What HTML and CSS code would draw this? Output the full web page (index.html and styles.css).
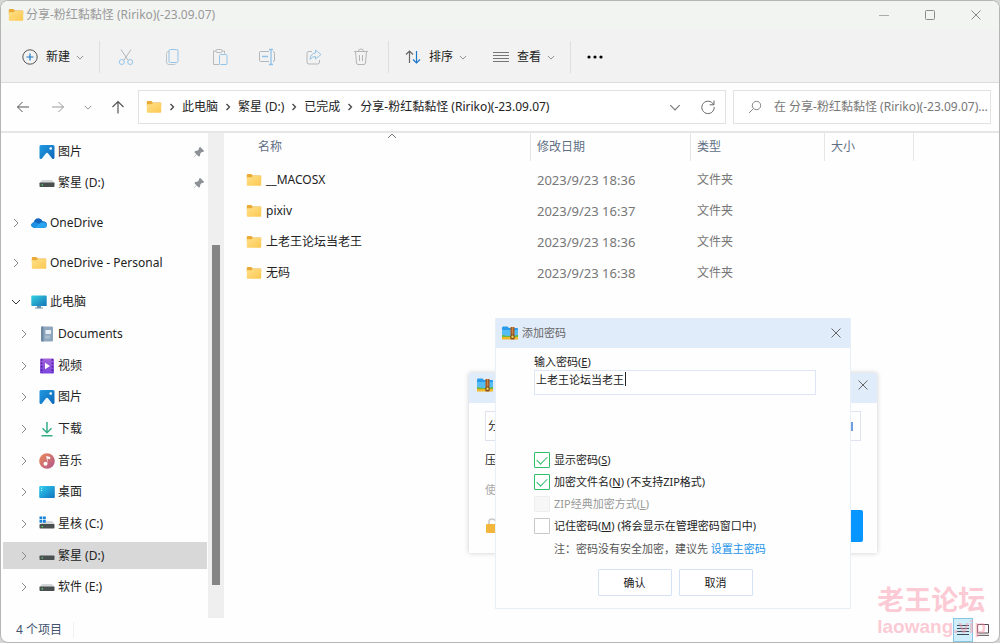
FILE: index.html
```html
<!DOCTYPE html>
<html lang="zh-CN">
<head>
<meta charset="utf-8">
<title>分享-粉红黏黏怪 (Ririko)(-23.09.07)</title>
<link rel="stylesheet" href="styles.css">
</head>
<body>
<svg class="defs" aria-hidden="true">
  <defs>
    <linearGradient id="g-folder" x1="0" y1="0" x2="1" y2="1"><stop offset="0" stop-color="#ffe08a"/><stop offset="1" stop-color="#fbc84f"/></linearGradient>
    <linearGradient id="g-pic" x1="0" y1="0" x2="1" y2="1"><stop offset="0" stop-color="#1e9be0"/><stop offset="1" stop-color="#1066b8"/></linearGradient>
    <linearGradient id="g-pc" x1="0" y1="0" x2="1" y2="1"><stop offset="0" stop-color="#35d0e0"/><stop offset="1" stop-color="#1474b8"/></linearGradient>
    <linearGradient id="g-desk" x1="0" y1="0" x2="1" y2="1"><stop offset="0" stop-color="#2fd0ee"/><stop offset="1" stop-color="#1272c0"/></linearGradient>
    <linearGradient id="g-music" x1="0" y1="0" x2="1" y2="1"><stop offset="0" stop-color="#ec8a55"/><stop offset="1" stop-color="#b0568f"/></linearGradient>
    <linearGradient id="g-video" x1="0" y1="0" x2="0" y2="1"><stop offset="0" stop-color="#a263dc"/><stop offset="1" stop-color="#7c46dd"/></linearGradient>
  </defs>
  <symbol id="folder" viewBox="0 0 16 16"><path d="M.8 3q0-1 1-1h3.5L6.800 3.500H14.400q.8 0 .8.800V7H.8z" fill="#e9ab35"/><path d="M.8 5.200h4.600L7 4h7.400q.8 0 .8.800v8.200q0 .800-.8.800H1.600q-.8 0-.8-.800z" fill="url(#g-folder)"/></symbol>
  <symbol id="picture" viewBox="0 0 16 16"><rect x=".5" y="1" width="15" height="14" rx="1.500" fill="url(#g-pic)"/><path d="M2.500 15L7 9.200q1-1 2 0L13.500 15z" fill="#f3fbff"/><circle cx="11.700" cy="4.500" r="1.300" fill="#fff"/></symbol>
  <symbol id="drive" viewBox="0 0 16 16"><path d="M3 5h10l2.500 3h-15z" fill="#d5d8d8"/><rect x=".5" y="7.500" width="15" height="4.500" rx=".8" fill="#4a4f50"/><rect x="2.500" y="9.300" width="1.500" height="1.200" fill="#58e06b"/></symbol>
  <symbol id="windrive" viewBox="0 0 16 16"><path d="M8 5h5l2.500 3H.5z" fill="#d5d8d8"/><rect x=".5" y="8" width="15" height="4.500" rx=".8" fill="#4a4f50"/><rect x="2.500" y="10" width="1.500" height="1.200" fill="#58e06b"/><path d="M.5.500h2.800v2.800H.5zM4 .500h2.800v2.800H4zM.5 4h2.800v2.800H.5zM4 4h2.800v2.800H4z" fill="#1683d8"/></symbol>
  <symbol id="cloud" viewBox="0 0 16 16"><path d="M3 12.800C-.5 12-.6 8.300 2.600 7.600 3.600 3 9.200 1.600 11.500 6.200 15 5.800 17 9 15.500 11.500q-.8 1.300-2.500 1.300z" fill="#1266bd"/><path d="M2.600 7.600Q5 6.500 7 8.300l6.500 4.400Q9 13.200 3 12.800-.5 12 .2 9.600.8 8 2.600 7.600z" fill="#1a91e2"/><path d="M7 9.700q4.500-4 8.200-1.200 1.300 2 .2 3.200-.8 1.100-2.400 1.100H3.500z" fill="#2aa4ee"/></symbol>
  <symbol id="pc" viewBox="0 0 16 16"><rect x=".3" y="1.500" width="15.400" height="10.500" rx=".8" fill="url(#g-pc)"/><path d="M6 12h4v1.500H6zM4 13.500h8v1H4z" fill="#6d91a8"/></symbol>
  <symbol id="docs" viewBox="0 0 16 16"><rect x="2" y=".5" width="12" height="15" rx="1" fill="#8ea7bd"/><path d="M2 1.500q0-1 1-1h1.500v15H3q-1 0-1-1z" fill="#6c88a2"/><path d="M6.500 4h5.500v4H6.500z" fill="#e6eef5"/><path d="M6 9.500h5v3H6z" fill="#a9bed0"/></symbol>
  <symbol id="video" viewBox="0 0 16 16"><rect x="1" y=".5" width="14" height="15" rx="1" fill="url(#g-video)"/><path d="M2.700 1v14M13.300 1v14" stroke="#4a239b" stroke-width="1.500" stroke-dasharray="1.700 1.700"/><path d="M6 4.800v6.400L11 8z" fill="#fff"/></symbol>
  <symbol id="download" viewBox="0 0 16 16"><path d="M8 1v10.500M3.500 7.200L8 11.700l4.500-4.500M2.500 14.700h11" fill="none" stroke="#35ad89" stroke-width="1.500"/></symbol>
  <symbol id="music" viewBox="0 0 16 16"><circle cx="8" cy="8" r="7.800" fill="url(#g-music)"/><path d="M7.200 3l4 1v2.200L8.500 5.500v5.300" fill="#fff"/><circle cx="6.500" cy="10.800" r="2" fill="#fff"/></symbol>
  <symbol id="desktop" viewBox="0 0 16 16"><rect x=".2" y="2" width="15.600" height="12" rx="1" fill="url(#g-desk)"/><path d="M2 4.200h1.200M2 6.500h1.200" stroke="#d8f6ff"/></symbol>
  <symbol id="pin" viewBox="0 0 12 12"><path d="M7 .8L11.200 5 10 6 8.700 6.100 7.200 7.800 7 10 5.700 10.500 3.700 8.500 1 11.200.6 11.300.8 10.900 3.400 8.200 1.500 6.300 2 5 4.200 4.800 5.900 3.300 6 2z" fill="#8d9196"/></symbol>
  <symbol id="right" viewBox="0 0 6 10"><path d="M1 1l4 4-4 4" fill="none" stroke="currentColor"/></symbol>
  <symbol id="crumb" viewBox="0 0 6 10"><path d="M1.500 2l3 3-3 3" fill="none" stroke="currentColor" stroke-width="1.300"/></symbol>
  <symbol id="down" viewBox="0 0 10 6"><path d="M1 1l4 4 4-4" fill="none" stroke="currentColor"/></symbol>
  <symbol id="close" viewBox="0 0 12 12"><path d="M1.500 1.500l9 9m0-9l-9 9" fill="none" stroke="currentColor"/></symbol>
  <symbol id="zip" viewBox="0 0 16 14"><path d="M0 2q0-1.500 1-1.500h4.500L7 2h8q1 0 1 1v5H0z" fill="#299be8"/><path d="M0 4h16v6H0z" fill="#55bdf3"/><path d="M0 9q8 2 16 0v4H0z" fill="#70b83c"/><path d="M0 11h16v2.500H0z" fill="#f1b72b"/><path d="M8.500 1h4v12.500h-4z" fill="#a95b22"/><path d="M10.500 1.500v8" stroke="#e8b566" stroke-dasharray="1 1"/><rect x="9" y="9" width="3" height="3.500" rx="1" fill="#f8cf59" stroke="#5a3015" stroke-width=".8"/></symbol>
</svg>

<div class="window">
  <header class="titlebar">
    <svg class="ico"><use href="#folder"/></svg>
    <h1 class="title">分享-粉红黏黏怪 (Ririko)(-23.09.07)</h1>
    <div class="winbtns">
      <button class="plain" aria-label="最小化"><svg width="12" height="12"><path d="M1 6.500h10" stroke="#aaa"/></svg></button>
      <button class="plain" aria-label="最大化"><svg width="12" height="12"><rect x="1.500" y="1.500" width="9" height="9" rx="1" fill="none" stroke="#8a8a8a"/></svg></button>
      <button class="plain" aria-label="关闭"><svg width="12" height="12"><use href="#close"/></svg></button>
    </div>
  </header>

  <div class="toolbar">
    <button class="plain tool">
      <svg width="16" height="16"><circle cx="8" cy="8" r="7.200" fill="none" stroke="#555"/><path d="M8 4.500v7M4.500 8h7" stroke="#1c78c8" stroke-width="1.200"/></svg>
      <span>新建</span><svg class="chev"><use href="#down"/></svg>
    </button>
    <span class="sep first-sep"></span>
    <div class="actions">
      <button class="plain" aria-label="剪切"><svg width="18" height="18" fill="none"><path d="M4 1.500l7.300 11M14 1.500l-7.300 11" stroke="#b2b7bb"/><circle cx="4.800" cy="14" r="2.500" stroke="#94c4e8"/><circle cx="13.200" cy="14" r="2.500" stroke="#94c4e8"/></svg></button>
      <button class="plain" aria-label="复制"><svg width="18" height="18" fill="none"><path d="M5 3.500H4q-1.500.5-1.500 2v8.500q0 2.500 2.500 2.500h5.500q1 0 1.500-1" stroke="#bcc4ca"/><rect x="5" y="1.500" width="9" height="13" rx="1.500" stroke="#94c4e8"/></svg></button>
      <button class="plain" aria-label="粘贴"><svg width="18" height="18" fill="none"><path d="M5 3H2.500v13.500H8M11 3h2.500v2.500" stroke="#b8b8b8"/><rect x="5" y="1.500" width="6" height="3" rx="1.200" stroke="#b8b8b8"/><rect x="8.500" y="6.500" width="7.500" height="10" rx="1" stroke="#94c4e8"/></svg></button>
      <button class="plain" aria-label="重命名"><svg width="18" height="18" fill="none"><path d="M11 3.500H2.500q-1 0-1 1v8q0 1 1 1H11M15 3.500q1.500 0 1.500 1.500v7q0 1.500-1.500 1.500" stroke="#b2b7bb"/><path d="M4 8.500h6M11 1.500h4M11 16.500h4M13 1.500v15" stroke="#8fc1e8" stroke-width="1.300"/></svg></button>
      <button class="plain" aria-label="共享"><svg width="18" height="18" fill="none"><path d="M7 3.500H4q-2 0-2 2V14q0 2 2 2h8.500q2 0 2-2v-2" stroke="#b2b7bb"/><path d="M10.500 2l5.500 4.500-5.500 4.500V8.500Q7 8.500 5 11.500 5.500 5.500 10.500 5z" stroke="#94c4e8"/></svg></button>
      <button class="plain" aria-label="删除"><svg width="18" height="18" fill="none" stroke="#b5b5b5"><path d="M2 3.500h14M6.500 3Q6.500 1 9 1t2.500 2M3.500 3.500L4.500 15q.2 1.500 1.500 1.500h6q1.300 0 1.500-1.500l1-11.500M7.500 7v6M10.500 7v6"/></svg></button>
    </div>
    <span class="sep"></span>
    <button class="plain tool">
      <svg width="16" height="16" fill="none"><path d="M4.500 14V2M1 5.500L4.500 2 8 5.500" stroke="#666" stroke-width="1.200"/><path d="M11.500 2v12M8 10.500l3.500 3.500 3.500-3.500" stroke="#1c78c8" stroke-width="1.200"/></svg>
      <span>排序</span><svg class="chev"><use href="#down"/></svg>
    </button>
    <button class="plain tool view">
      <svg width="16" height="16"><path d="M0 3.500h16M0 6.500h16M0 9.500h16M0 12.500h16" stroke="#777"/></svg>
      <span>查看</span><svg class="chev"><use href="#down"/></svg>
    </button>
    <span class="sep"></span>
    <button class="plain more" aria-label="更多"><svg width="16" height="16"><circle cx="2" cy="8" r="1.600"/><circle cx="8" cy="8" r="1.600"/><circle cx="14" cy="8" r="1.600"/></svg></button>
  </div>

  <div class="navbar">
    <div class="history">
      <button class="plain" aria-label="后退"><svg width="14" height="14" fill="none" stroke="#555"><path d="M13 7H1.500M6.500 2l-5 5 5 5"/></svg></button>
      <button class="plain" aria-label="前进"><svg width="14" height="14" fill="none" stroke="#999"><path d="M1 7h11.500M7.500 2l5 5-5 5"/></svg></button>
      <button class="plain" aria-label="最近位置"><svg class="chev"><use href="#down"/></svg></button>
      <button class="plain" aria-label="向上"><svg width="14" height="14" fill="none" stroke="#555" stroke-width="1.200"><path d="M7 13.500V1.500M1.500 7L7 1.500 12.500 7"/></svg></button>
    </div>
    <div class="address">
      <svg class="ico"><use href="#folder"/></svg>
      <svg class="crumb"><use href="#crumb"/></svg><a href="#">此电脑</a>
      <svg class="crumb"><use href="#crumb"/></svg><a href="#">繁星 (D:)</a>
      <svg class="crumb"><use href="#crumb"/></svg><a href="#">已完成</a>
      <svg class="crumb"><use href="#crumb"/></svg><a href="#">分享-粉红黏黏怪 (Ririko)(-23.09.07)</a>
      <button class="plain history-toggle" aria-label="展开"><svg width="12" height="7"><use href="#down"/></svg></button>
      <button class="plain" aria-label="刷新"><svg width="16" height="16" fill="none" stroke="#666"><path d="M13.500 5.500A6.200 6.200 0 1 0 14.200 8M14 1.500v4.300H9.700"/></svg></button>
    </div>
    <label class="search">
      <svg width="14" height="14" fill="none" stroke="#888"><circle cx="8.500" cy="5.500" r="4.200"/><path d="M5.500 8.500L1 13"/></svg>
      <input type="text" aria-label="搜索" placeholder="在 分享-粉红黏黏怪 (Ririko)(-23.09.07) 中搜索">
    </label>
  </div>

  <main class="main">
    <nav class="tree" aria-label="导航窗格">
      <a href="#" class="row sub"><svg class="ico"><use href="#picture"/></svg><span>图片</span><svg class="pin"><use href="#pin"/></svg></a>
      <a href="#" class="row sub"><svg class="ico"><use href="#drive"/></svg><span>繁星 (D:)</span><svg class="pin"><use href="#pin"/></svg></a>
      <a href="#" class="row top"><svg class="arrow"><use href="#right"/></svg><svg class="ico"><use href="#cloud"/></svg><span>OneDrive</span></a>
      <a href="#" class="row top"><svg class="arrow"><use href="#right"/></svg><svg class="ico"><use href="#folder"/></svg><span>OneDrive - Personal</span></a>
      <a href="#" class="row top"><svg class="arrow open"><use href="#right"/></svg><svg class="ico"><use href="#pc"/></svg><span>此电脑</span></a>
      <a href="#" class="row"><svg class="arrow"><use href="#right"/></svg><svg class="ico"><use href="#docs"/></svg><span>Documents</span></a>
      <a href="#" class="row"><svg class="arrow"><use href="#right"/></svg><svg class="ico"><use href="#video"/></svg><span>视频</span></a>
      <a href="#" class="row"><svg class="arrow"><use href="#right"/></svg><svg class="ico"><use href="#picture"/></svg><span>图片</span></a>
      <a href="#" class="row"><svg class="arrow"><use href="#right"/></svg><svg class="ico"><use href="#download"/></svg><span>下载</span></a>
      <a href="#" class="row"><svg class="arrow"><use href="#right"/></svg><svg class="ico"><use href="#music"/></svg><span>音乐</span></a>
      <a href="#" class="row"><svg class="arrow"><use href="#right"/></svg><svg class="ico"><use href="#desktop"/></svg><span>桌面</span></a>
      <a href="#" class="row"><svg class="arrow"><use href="#right"/></svg><svg class="ico"><use href="#windrive"/></svg><span>星核 (C:)</span></a>
      <a href="#" class="row selected"><svg class="arrow"><use href="#right"/></svg><svg class="ico"><use href="#drive"/></svg><span>繁星 (D:)</span></a>
      <a href="#" class="row"><svg class="arrow"><use href="#right"/></svg><svg class="ico"><use href="#drive"/></svg><span>软件 (E:)</span></a>
    </nav>
    <div class="scroll"><div class="thumb"></div></div>
    <section class="files">
      <table>
        <colgroup><col class="c-name"><col class="c-date"><col class="c-type"><col class="c-size"><col></colgroup>
        <thead><tr>
          <th><div class="hd first">名称<svg class="sort"><use href="#down"/></svg></div></th>
          <th><div class="hd">修改日期</div></th><th><div class="hd">类型</div></th><th><div class="hd">大小</div></th><td></td>
        </tr></thead>
        <tbody>
          <tr><td><div class="name"><svg class="ico"><use href="#folder"/></svg>__MACOSX</div></td><td class="date">2023/9/23 18:36</td><td>文件夹</td><td></td><td></td></tr>
          <tr><td><div class="name"><svg class="ico"><use href="#folder"/></svg>pixiv</div></td><td class="date">2023/9/23 16:37</td><td>文件夹</td><td></td><td></td></tr>
          <tr><td><div class="name"><svg class="ico"><use href="#folder"/></svg>上老王论坛当老王</div></td><td class="date">2023/9/23 18:36</td><td>文件夹</td><td></td><td></td></tr>
          <tr><td><div class="name"><svg class="ico"><use href="#folder"/></svg>无码</div></td><td class="date">2023/9/23 16:38</td><td>文件夹</td><td></td><td></td></tr>
        </tbody>
      </table>
    </section>
  </main>

  <footer class="status">
    <span class="count">4 个项目</span>
    <div class="views">
      <button class="plain viewbtn on" aria-label="详细信息"><svg width="12" height="12"><path d="M0 1.500h12M0 4.500h12M0 7.500h12M0 10.500h12" stroke="#3c4b55"/></svg></button>
      <button class="plain viewbtn" aria-label="大图标"><svg width="12" height="12" fill="none"><path d="M.5.500h11v8.500H.5zM0 11.300h12" stroke="#544850"/></svg></button>
    </div>
  </footer>
</div>

<section class="dialog back" aria-label="压缩">
  <div class="dlg-head"><svg class="zip"><use href="#zip"/></svg><button class="plain" aria-label="关闭"><svg width="12" height="12"><use href="#close"/></svg></button></div>
  <div class="back-body">
    <div class="back-field"><span>分</span><svg width="8" height="12"><path d="M3 2h5v9H3z" fill="#6d9fe0"/></svg></div>
    <div class="back-line">压</div>
    <div class="back-hint">使</div>
    <div class="back-foot">
      <svg width="16" height="18"><path d="M4 8V4.500Q4 2 7 2t3 2" fill="none" stroke="#c8c8c8" stroke-width="1.500"/><rect x="1" y="7" width="13" height="9" rx="1" fill="#f3b63c"/></svg>
      <button class="go" aria-label="立即压缩"></button>
    </div>
  </div>
</section>

<section class="dialog front" aria-labelledby="dlg-title">
  <div class="dlg-head"><svg class="zip"><use href="#zip"/></svg><h2 id="dlg-title">添加密码</h2><button class="plain" aria-label="关闭"><svg width="12" height="12"><use href="#close"/></svg></button></div>
  <form class="dlg-body">
    <label class="pw-label" for="pw">输入密码(<u>E</u>)</label>
    <div class="pw-wrap"><input class="pw" id="pw" type="text" value="上老王论坛当老王"><span class="caret"></span></div>
    <div class="checks">
      <label><input type="checkbox" checked><span>显示密码(<u>S</u>)</span></label>
      <label><input type="checkbox" checked><span>加密文件名(<u>N</u>) (不支持ZIP格式)</span></label>
      <label class="off"><input type="checkbox" disabled><span>ZIP经典加密方式(<u>L</u>)</span></label>
      <label><input type="checkbox"><span>记住密码(<u>M</u>) (将会显示在管理密码窗口中)</span></label>
    </div>
    <p class="note">注：密码没有安全加密，建议先 <a href="#">设置主密码</a></p>
    <div class="btns"><button type="button">确认</button><button type="button">取消</button></div>
  </form>
</section>

<div class="mark"><span class="mark-cn">老王论坛</span><span class="mark-en">laowang.vip</span></div>
</body>
</html>
```
FILE: styles.css
```css
* { box-sizing: border-box; }
body {
  margin: 0;
  min-height: 100vh;
  display: flex;
  background: #d4d6d4;
  color: #222;
  font: 12px/16px "Noto Sans", "Noto Sans CJK SC", sans-serif;
}
svg { display: block; flex: none; }
.defs { position: absolute; width: 0; height: 0; }
a { color: inherit; text-decoration: none; }
h1, h2, p { margin: 0; font-size: inherit; font-weight: 400; }
button, input { font: inherit; color: inherit; }
.plain { border: 0; padding: 0; background: none; display: flex; align-items: center; justify-content: center; }
.ico { width: 16px; height: 16px; }
.chev { width: 8px; height: 5px; color: #777; }

.window {
  flex: 1;
  display: flex;
  flex-direction: column;
  min-width: 0;
  border: 1px solid #b4b6b4;
  border-radius: 8px;
  background: #fefefe;
  overflow: hidden;
}
.titlebar { display: flex; align-items: center; height: 28px; padding: 0 17px 0 7px; gap: 2px; background: #f2f4f2; color: #999; }
.winbtns { display: flex; gap: 34px; margin-left: auto; color: #8a8a8a; }

.toolbar { display: flex; align-items: center; height: 54px; padding: 3px 0 0 21px; background: #f2f2f2; border-bottom: 1px solid #dcdcdc; }
.tool { gap: 8px; }
.tool .chev { margin-left: -2px; }
.view { margin-left: 26px; }
.sep { width: 1px; height: 32px; margin: 0 16px; background: #dedede; }
.first-sep { margin: 0 15px; }
.actions { display: flex; gap: 29px; padding: 0 2px; }
.view + .sep { margin-left: 15px; }

.navbar { display: flex; align-items: center; height: 50px; padding: 0 8px 0 15px; gap: 7px; border-bottom: 2px solid #e6e6e6; }
.history { display: flex; align-items: center; gap: 21px; width: 115px; }
.history .chev { margin: 0 -2px; }
.address, .search { display: flex; align-items: center; height: 34px; border: 1px solid #e2e2e2; background: #fff; }
.address { flex: 1; padding: 0 9px 0 7px; gap: 7px; white-space: nowrap; }
.crumb { width: 6px; height: 10px; color: #444; }
.history-toggle { margin-left: auto; margin-right: 12px; color: #777; }
.address .plain { color: #777; }
.search { width: 258px; padding: 0 2px 0 14px; gap: 12px; }
.search input { flex: 1; min-width: 0; border: 0; padding: 0; outline: 0; background: none; text-overflow: ellipsis; }
.search input::placeholder { color: #777; opacity: 1; }

.main { flex: 1; display: flex; }
.tree { display: flex; flex-direction: column; width: 207px; padding: 3px 1px 15px 2px; }
.row { flex: 1; display: flex; align-items: center; min-height: 28px; padding: 0 2px 0 18px; gap: 3px; border-block: 2px solid transparent; background-clip: padding-box; }
.row.sub { padding-left: 36px; }
.row.top { margin-top: 8px; padding-left: 10px; }
.row.selected { background-color: #d8d8d8; }
.arrow { width: 6px; height: 10px; margin-right: 9px; color: #888; }
.arrow.open { transform: rotate(90deg); color: #333; }
.pin { width: 12px; height: 12px; margin-left: auto; }
.scroll { width: 16px; padding: 112px 4px 33px 4px; background: #efefef; display: flex; }
.thumb { flex: 1; background: #858585; }

.files { flex: 1; min-width: 0; padding-left: 7px; }
table { width: 100%; table-layout: fixed; border-collapse: collapse; }
.c-name { width: 300px; }
.c-date { width: 160px; }
.c-type { width: 134px; }
.c-size { width: 89px; }
tr { height: 31px; }
th, td { padding: 0; font-weight: 400; text-align: left; }
th { vertical-align: top; color: #5e6f85; }
.hd { display: flex; align-items: center; position: relative; height: 28px; padding-left: 6px; border-right: 1px solid #e6e6e6; }
.hd.first { padding-left: 27px; }
.sort { position: absolute; left: 50%; top: 0; width: 10px; height: 6px; margin-left: 6px; transform: rotate(180deg); color: #777; }
tbody td { padding-left: 6px; color: #777; }
tbody td:first-child { padding-left: 15px; color: #222; }
.date { font-size: 13px; }
.name { display: flex; align-items: center; gap: 4px; }

.status { display: flex; align-items: center; justify-content: space-between; height: 24px; padding: 0 6px 0 15px; color: #43536d; }
.count { padding-right: 11px; border-right: 1px solid #f0f0f0; }
.views { display: flex; }
.viewbtn { width: 20px; height: 24px; }
.viewbtn.on { background: #cdeefa; border: 1px solid #86c5e2; }

.dialog { position: absolute; background: #fefefe; font-size: 11px; }
.dlg-head { display: flex; align-items: center; height: 30px; padding: 0 8px 1px 6px; gap: 4px; background: #e1ecfa; color: #666; }
.dlg-head .plain { margin-left: auto; color: #666; }
.zip { width: 16px; height: 14px; }
.back { left: 469px; top: 373px; width: 408px; box-shadow: 0 0 5px rgba(0, 0, 0, .2); }
.back .dlg-head { padding: 0 8px 7px; }
.back-body { padding: 8px 14px 11px 16px; }
.back-field { display: flex; align-items: center; justify-content: space-between; height: 30px; margin-right: 2px; padding: 0 7px 0 2px; border: 1px solid #dfe3ef; }
.back-line { margin-top: 11px; }
.back-hint { margin-top: 14px; color: #aaa; }
.back-foot { display: flex; align-items: center; justify-content: space-between; margin-top: 12px; }
.go { width: 90px; height: 32px; border: 0; border-radius: 2px; background: #0795ff; }
.front { left: 495px; top: 318px; width: 356px; border: 1px solid #e9eff7; border-top: 0; }
.dlg-body { padding: 6px 34px 12px 38px; }
.pw-label { display: block; }
.pw-wrap { position: relative; }
.pw { display: block; width: 100%; height: 25px; padding: 0 1px 7px; border: 1px solid #dce6f4; border-radius: 0; outline: 0; background: #fff; }
.caret { position: absolute; left: 91px; top: 2px; width: 1px; height: 14px; background: #222; }
.checks { display: flex; flex-direction: column; gap: 6px; margin-top: 57px; }
.checks label { display: flex; align-items: center; gap: 4px; white-space: nowrap; }
.checks .off { color: #999; }
.checks input { appearance: none; display: grid; place-items: center; width: 16px; height: 16px; margin: 0; border: 1px solid #c8c8c8; border-radius: 1px; background: #fff; }
.checks input:checked { border-color: #2fbf6b; }
.checks input:checked::after { content: ""; width: 9px; height: 5px; margin-bottom: 3px; border: solid #2fbf6b; border-width: 0 0 1px 1px; transform: rotate(-45deg); }
.checks input:disabled { border-color: #eee; background: #f7f7f7; }
.note { margin: 7px 0 0 20px; color: #555; white-space: nowrap; }
.note a { color: #1b93e8; }
.btns { display: flex; gap: 7px; justify-content: center; margin-top: 12px; }
.btns button { width: 74px; height: 27px; padding: 0; border: 1px solid #d5e2f6; border-radius: 1px; background: #fff; }

.mark { position: absolute; right: 14px; bottom: 6px; display: flex; flex-direction: column; color: rgba(250, 150, 170, .5); font-family: "Liberation Sans", "Noto Sans CJK SC", sans-serif; font-weight: 700; pointer-events: none; }
.mark-cn { font-size: 27px; line-height: 32px; }
.mark-en { font-size: 19px; line-height: 20px; }
```
